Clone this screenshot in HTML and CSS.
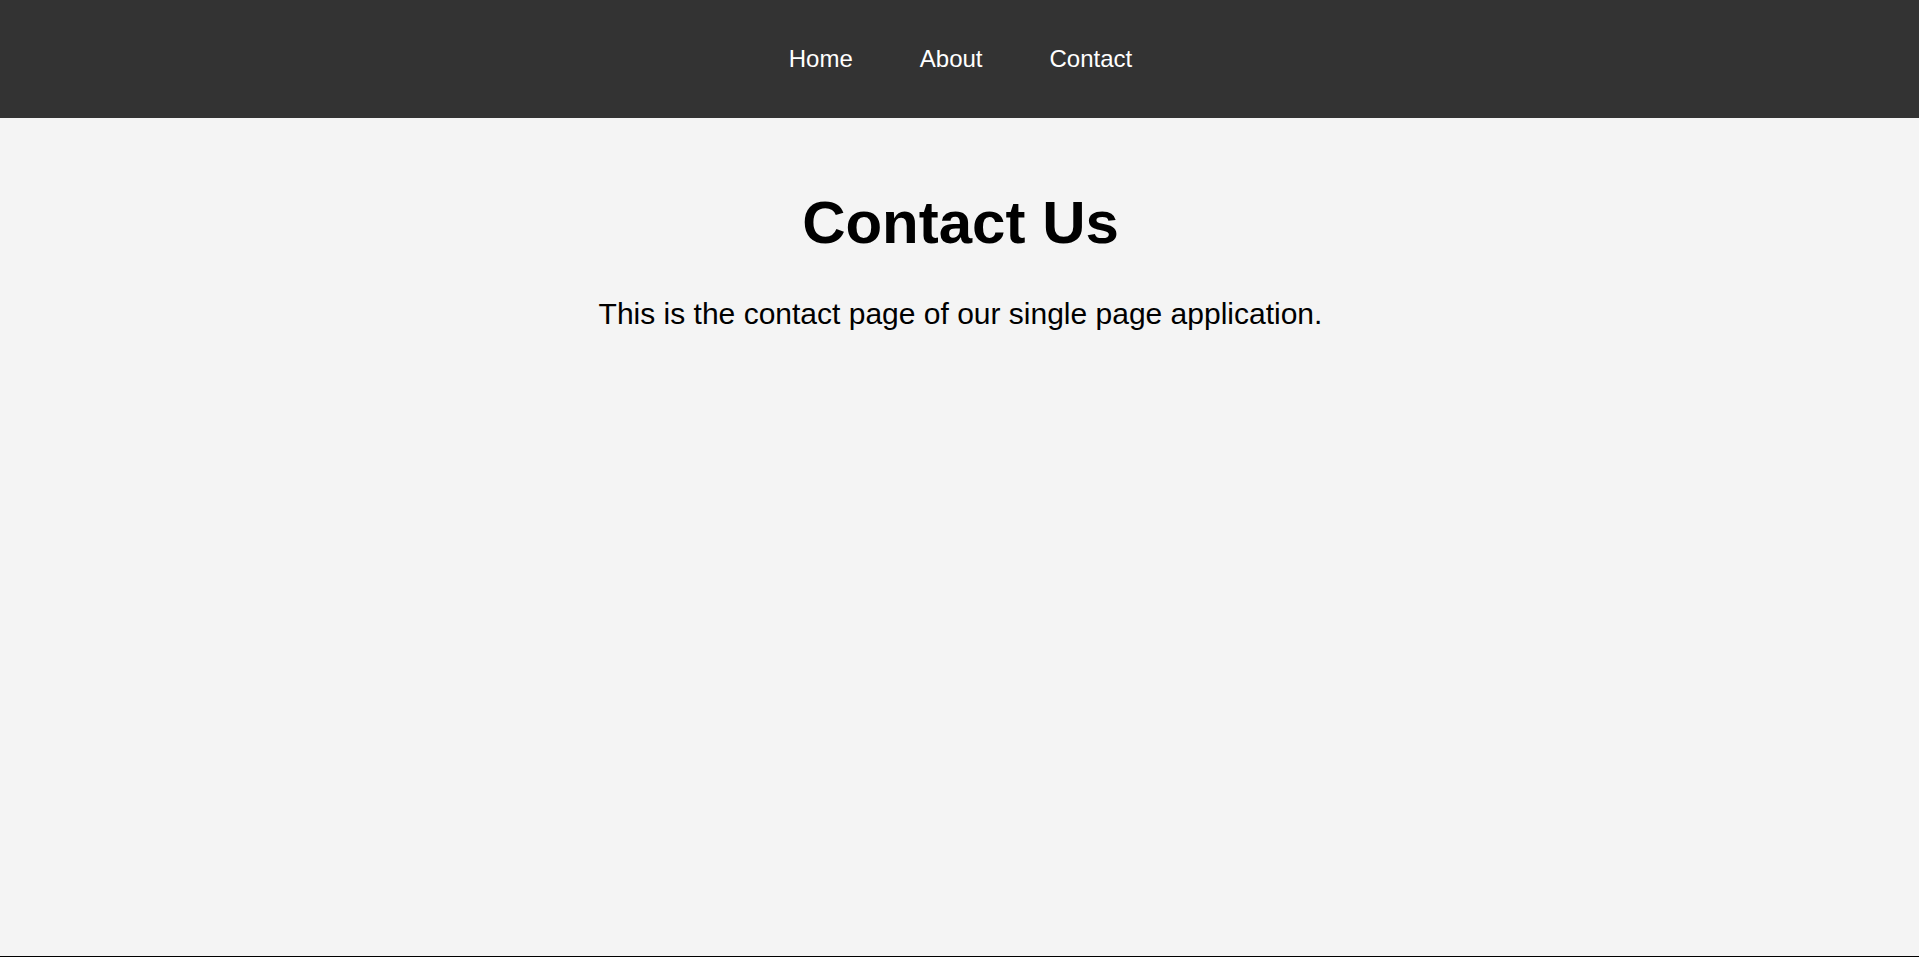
FILE: index.html
```html
<!DOCTYPE html>
<html lang="en">
<head>
<meta charset="utf-8">
<title>Contact Us</title>
<link rel="stylesheet" href="styles.css">
</head>
<body>
<div class="page">
  <nav class="nav">
    <a class="nav-link" href="#home">Home</a>
    <a class="nav-link" href="#about">About</a>
    <a class="nav-link" href="#contact">Contact</a>
  </nav>
  <main class="content">
    <h1 class="title">Contact Us</h1>
    <p class="lead">This is the contact page of our single page application.</p>
  </main>
</div>
</body>
</html>
```
FILE: styles.css
```css
* { box-sizing: border-box; }
html, body { margin: 0; padding: 0; }
body {
  font-family: "Liberation Sans", Arial, sans-serif;
  background: #f4f4f4;
  color: #000;
}
.page {
  min-height: 100vh;
  display: flex;
  flex-direction: column;
  border-bottom: 1px solid #000;
}
.nav {
  height: 118px;
  background: #333;
  display: flex;
  justify-content: center;
  align-items: center;
  gap: 67px;
  padding-left: 2px;
}
.nav-link {
  color: #fff;
  text-decoration: none;
  font-size: 24px;
}
.content {
  flex: 1;
  text-align: center;
  padding-top: 70px;
  padding-left: 2px;
}
.title {
  font-size: 60px;
  font-weight: bold;
  margin: 0 0 40px;
}
.lead {
  font-size: 30px;
  margin: 0;
}
```
